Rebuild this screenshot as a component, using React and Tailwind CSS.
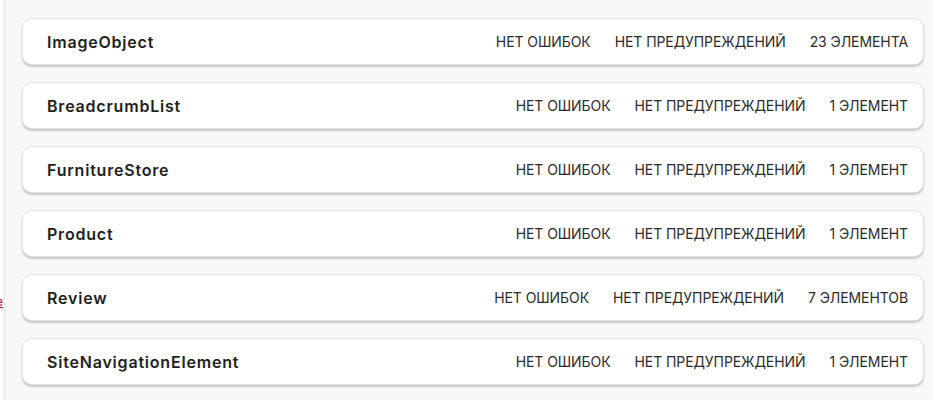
import React from "react";

const items = [
  { name: "ImageObject", count: "23 ЭЛЕМЕНТА" },
  { name: "BreadcrumbList", count: "1 ЭЛЕМЕНТ" },
  { name: "FurnitureStore", count: "1 ЭЛЕМЕНТ" },
  { name: "Product", count: "1 ЭЛЕМЕНТ" },
  { name: "Review", count: "7 ЭЛЕМЕНТОВ" },
  { name: "SiteNavigationElement", count: "1 ЭЛЕМЕНТ" },
];

export default function App() {
  return (
    <div className="flex min-h-[400px] bg-[#f8f8f8] font-['Inter',sans-serif] text-[#222]">
      {/* left strip */}
      <div className="relative w-[5px] shrink-0 overflow-hidden bg-white border-r border-[#e3e3e3]">
        <span className="absolute right-[1px] top-[296px] text-[12px] leading-none text-[#b0002a] underline">
          e
        </span>
      </div>

      <main className="flex-1 pl-[17px] pr-[9px] pt-[18px] flex flex-col gap-[17px]">
        {items.map((it) => (
          <div
            key={it.name}
            className="h-[47px] flex items-center justify-between pl-[24px] pr-[15px] bg-white border border-[#e0e0e0] rounded-[10px] shadow-[0_2px_2px_rgba(0,0,0,0.2)]"
          >
            <div className="text-[16px] font-semibold tracking-[0.8px] text-[#1e1e1e]">
              {it.name}
            </div>
            <div className="flex items-center gap-[24px] text-[14px] tracking-[-0.08px] uppercase text-[#2b2b2b]">
              <span>НЕТ ОШИБОК</span>
              <span>НЕТ ПРЕДУПРЕЖДЕНИЙ</span>
              <span>{it.count}</span>
            </div>
          </div>
        ))}
      </main>
    </div>
  );
}
